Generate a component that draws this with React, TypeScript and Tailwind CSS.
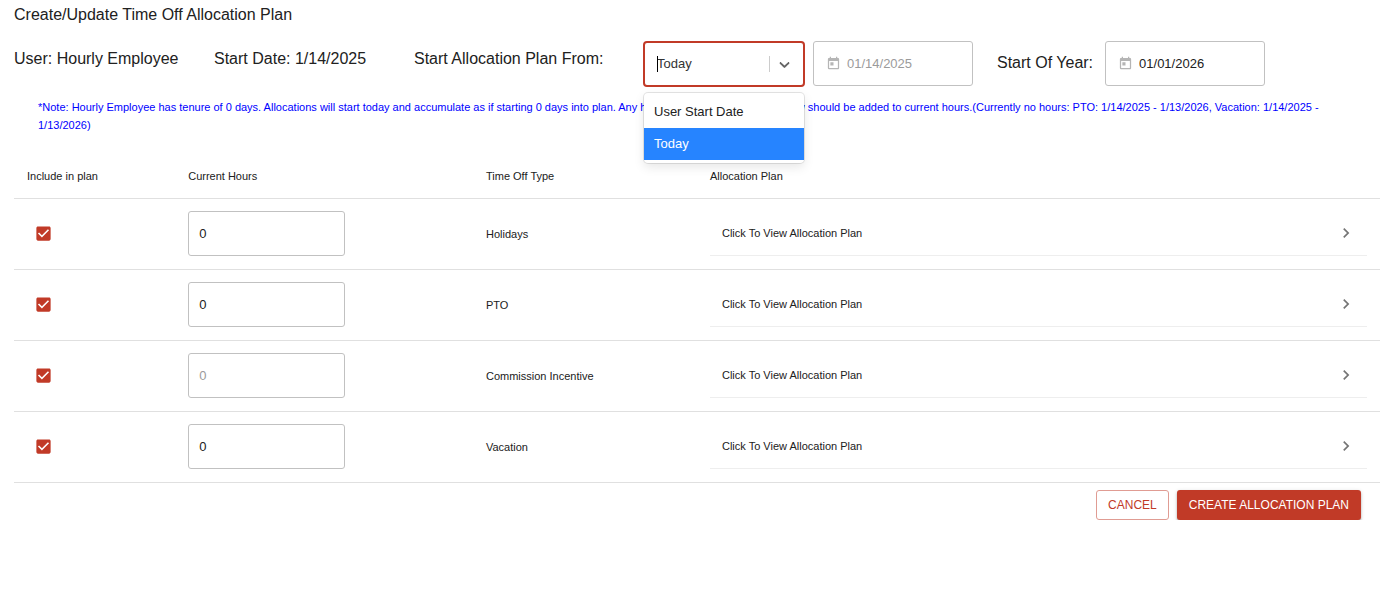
import { useState } from "react";
import { MdToday, MdChevronRight } from "react-icons/md";

type TimeOffRow = { id: string; name: string; hours: string; disabled?: boolean };

const rows: TimeOffRow[] = [
  { id: "holidays", name: "Holidays", hours: "0" },
  { id: "pto", name: "PTO", hours: "0" },
  { id: "commission", name: "Commission Incentive", hours: "0", disabled: true },
  { id: "vacation", name: "Vacation", hours: "0" },
];

const startOptions = ["User Start Date", "Today"];

function IncludeCheckbox({ label }: { label: string }) {
  return (
    <label className="relative block size-5">
      <input
        type="checkbox"
        defaultChecked
        aria-label={label}
        className="peer block size-5 cursor-pointer appearance-none"
      />
      <svg
        viewBox="0 0 24 24"
        aria-hidden="true"
        className="pointer-events-none absolute inset-0 hidden size-[19px] fill-[#c13a27] peer-checked:block"
      >
        <path d="M19 3H5c-1.11 0-2 .9-2 2v14c0 1.1.89 2 2 2h14c1.11 0 2-.9 2-2V5c0-1.1-.89-2-2-2zm-9 14l-5-5 1.41-1.41L10 14.17l7.59-7.59L19 8l-9 9z" />
      </svg>
    </label>
  );
}

function DateField({ id, value, label, disabled }: { id: string; value: string; label?: string; disabled?: boolean }) {
  return (
    <div className="flex h-[45px] w-40 items-center gap-1.5 rounded-[3px] border border-[#c1c1c1] px-3">
      <MdToday className="size-[15px] shrink-0 text-[#b5b5b5]" />
      <input
        id={id}
        type="text"
        aria-label={label}
        defaultValue={value}
        disabled={disabled}
        className="w-full min-w-0 bg-transparent text-[13px] outline-none disabled:text-[#9b9b9b]"
      />
    </div>
  );
}

function StartSelect() {
  const [value, setValue] = useState("Today");
  return (
    <div className="relative w-[162px]">
      <select
        id="plan-start"
        value={value}
        onChange={(e) => setValue(e.target.value)}
        className="block h-[46px] w-full appearance-none rounded-[4px] border-2 border-[#c13a27] bg-white pl-3 text-[13px] text-[#333] outline-none"
      >
        {startOptions.map((o) => (
          <option key={o}>{o}</option>
        ))}
      </select>
      <span className="pointer-events-none absolute top-[15px] left-3.5 h-4 w-px bg-black" />
      <span className="pointer-events-none absolute top-[15px] right-[35px] h-4 w-px bg-[#ccc]" />
      <svg
        viewBox="0 0 20 20"
        aria-hidden="true"
        className="pointer-events-none absolute top-[15px] right-3 size-[17px] fill-[#666]"
      >
        <path d="M4.516 7.548c0.436-0.446 1.043-0.481 1.576 0l3.908 3.747 3.908-3.747c0.533-0.481 1.141-0.446 1.574 0 0.436 0.445 0.408 1.197 0 1.615-0.406 0.418-4.695 4.502-4.695 4.502-0.217 0.223-0.502 0.335-0.787 0.335s-0.57-0.112-0.789-0.335c0 0-4.287-4.084-4.695-4.502s-0.436-1.17 0-1.615z" />
      </svg>
      <ul
        role="listbox"
        aria-label="Start allocation plan from"
        className="absolute top-[52px] left-px z-10 w-40 rounded-[4px] bg-white pt-[3px] pb-[3px] text-[13px] shadow-[0_0_0_1px_rgba(0,0,0,0.1),0_4px_11px_rgba(0,0,0,0.1)]"
      >
        {startOptions.map((o) => (
          <li
            key={o}
            role="option"
            aria-selected={o === value}
            onClick={() => setValue(o)}
            className="flex h-8 cursor-default items-center px-2.5 aria-selected:bg-[#2684ff] aria-selected:text-white"
          >
            {o}
          </li>
        ))}
      </ul>
    </div>
  );
}

export default function App() {
  return (
    <main className="bg-white pr-3 pl-3.5 font-['Liberation_Sans',Arial,sans-serif] text-[#212121]">
      <h1 className="pt-[3px] text-base leading-6">Create/Update Time Off Allocation Plan</h1>

      <section className="mt-3.5 flex flex-wrap text-base leading-6">
        <p className="w-[200px] pt-1.5">User: Hourly Employee</p>
        <p className="w-[200px] pt-1.5">Start Date: 1/14/2025</p>
        <label htmlFor="plan-start" className="w-[229px] pt-1.5">
          Start Allocation Plan From:
        </label>
        <StartSelect />
        <div className="ml-2">
          <DateField id="start-date" label="Plan start date" value="01/14/2025" disabled />
        </div>
        <div className="ml-6 flex gap-3">
          <label htmlFor="start-of-year" className="pt-2.5">
            Start Of Year:
          </label>
          <DateField id="start-of-year" value="01/01/2026" />
        </div>
      </section>

      <p className="mt-[11px] px-6 text-[11px] leading-[18px] text-[#0000ff]">
        *Note: Hourly Employee has tenure of 0 days. Allocations will start today and accumulate as if starting 0 days
        into plan. Any hours that were accrued until now should be added to current hours.(Currently no hours: PTO:
        1/14/2025 - 1/13/2026, Vacation: 1/14/2025 - 1/13/2026)
      </p>

      <table className="mt-[23px] w-full table-fixed border-collapse text-left text-[11px] leading-4">
        <thead>
          <tr className="h-[41px] border-b border-[#e0e0e0]">
            <th className="w-[11.8%] px-[13px] pb-0.5 font-normal">Include in plan</th>
            <th className="w-[21.8%] px-[13px] pb-0.5 font-normal">Current Hours</th>
            <th className="w-[16.4%] px-[13px] pb-0.5 font-normal">Time Off Type</th>
            <th className="w-[50%] px-[13px] pb-0.5 font-normal">Allocation Plan</th>
          </tr>
        </thead>
        <tbody>
          {rows.map((row) => (
            <tr key={row.id} className="h-[71px] border-b border-[#e0e0e0]">
              <td className="px-5">
                <IncludeCheckbox label={`Include ${row.name} in plan`} />
              </td>
              <td className="px-[13px]">
                <input
                  type="text"
                  aria-label={`Current hours for ${row.name}`}
                  defaultValue={row.hours}
                  disabled={row.disabled}
                  className="block h-[45px] w-[157px] rounded-[3px] border border-[#c1c1c1] px-2.5 text-[13px] outline-none disabled:text-[#9b9b9b]"
                />
              </td>
              <td className="px-[13px]">{row.name}</td>
              <td className="px-[13px]">
                <button
                  type="button"
                  className="flex h-[45px] w-full cursor-pointer items-center justify-between border-b border-[#eeeeee] pr-[11px] pl-3 text-left"
                >
                  Click To View Allocation Plan
                  <MdChevronRight className="size-5 text-[#757575]" />
                </button>
              </td>
            </tr>
          ))}
        </tbody>
      </table>

      <div className="mt-[7px] flex justify-end gap-2 pr-[19px] text-xs">
        <button
          type="button"
          className="h-[30px] cursor-pointer rounded-[3px] border border-[#e09c93] px-[11px] text-[#c13a27]"
        >
          CANCEL
        </button>
        <button
          type="button"
          className="h-[30px] cursor-pointer rounded-[3px] bg-[#c13a27] px-3 text-white shadow-[0_2px_2px_rgba(0,0,0,0.25),0_1px_4px_rgba(0,0,0,0.15)]"
        >
          CREATE ALLOCATION PLAN
        </button>
      </div>
    </main>
  );
}
